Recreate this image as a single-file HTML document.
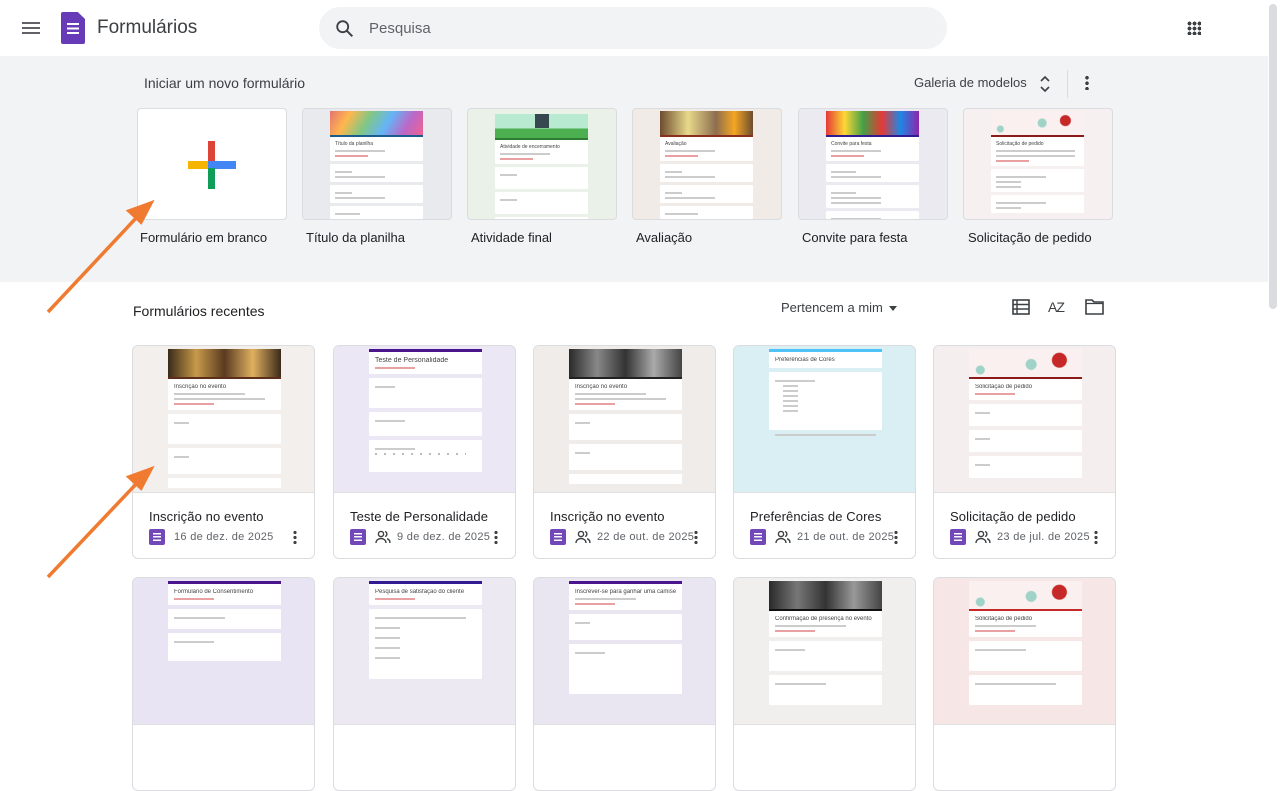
<!DOCTYPE html>
<html><head><meta charset="utf-8"><style>
*{box-sizing:border-box;margin:0;padding:0}
body{width:1280px;height:697px;overflow:hidden;background:#fff;font-family:"Liberation Sans",Arial,sans-serif;color:#202124;position:relative}
.a{position:absolute}
.gal{position:absolute;left:0;top:56px;width:1268px;height:226px;background:#f1f3f4}
.sb{position:absolute;left:1269px;top:4px;width:8px;height:305px;background:#dadce0;border-radius:4px}
.tc{position:absolute;top:108px;width:150px;height:112px;border:1px solid #dadce0;border-radius:4px;overflow:hidden;background:#fff}
.tl{position:absolute;top:230px;font-size:13px;color:#202124}
.tp{position:absolute;left:27px;width:93px;top:2px;bottom:0}
.img{height:24px}
.ln{height:2px}
.bk{background:#fff;margin-bottom:3px;padding:4px 5px;border-radius:1px}
.t1{font-size:5px;color:#444;white-space:nowrap;overflow:hidden}
.t2{height:2px;background:#ccc;margin-top:3px;width:60%}
.t3{height:2px;background:#e8a0a0;margin-top:3px;width:40%}
.rc{position:absolute;width:183px;height:214px;border:1px solid #dadce0;border-radius:6px;overflow:hidden;background:#fff}
.pv{position:absolute;left:0;top:0;width:100%;height:147px;border-bottom:1px solid #e0e0e0}
.pp{position:absolute;left:35px;width:113px;top:3px;bottom:0}
.pp .img{height:28px}
.pp .bk{margin-bottom:4px;padding:5px 6px}
.pp .t1{font-size:6px}
.nm{position:absolute;left:16px;top:163px;font-size:13px;letter-spacing:.1px}
.mt{position:absolute;left:16px;top:182px;height:18px;display:flex;align-items:center;font-size:11px;color:#5f6368;letter-spacing:.3px}
.fi{width:16px;height:16px;background:#7248b9;border-radius:2px;margin-right:9px;position:relative}
.fi:after{content:"";position:absolute;left:4px;top:4px;width:8px;height:8px;background:repeating-linear-gradient(#fff 0 1.5px,transparent 1.5px 3.2px)}
.dots{position:absolute;right:17px;top:184px;width:4px;height:14px;background:radial-gradient(circle,#444 1.6px,transparent 1.8px) 0 0/4px 5px repeat-y}
.ppl{margin-right:6px}
</style></head><body>
<div class="a" style="left:22px;top:22px;width:18px;height:2px;background:#5f6368;box-shadow:0 5px 0 #5f6368,0 10px 0 #5f6368"></div>
<div class="a" style="left:61px;top:12px;width:24px;height:32px;background:#673ab7;border-radius:2px;clip-path:polygon(0 0,70% 0,100% 22%,100% 100%,0 100%)"></div>
<div class="a" style="left:67px;top:23px;width:12px;height:11px;background:repeating-linear-gradient(#fff 0 2px,transparent 2px 4.5px)"></div>
<div class="a" style="left:97px;top:17px;font-size:19px;color:#3c4043">Formulários</div>
<div class="a" style="left:319px;top:7px;width:628px;height:42px;background:#f1f3f4;border-radius:21px"></div>
<svg class="a" style="left:334px;top:18px" width="22" height="22" viewBox="0 0 24 24"><circle cx="9.5" cy="9.5" r="6" fill="none" stroke="#3c4043" stroke-width="2"/><path d="M14 14l6 6" stroke="#3c4043" stroke-width="2.2"/></svg>
<div class="a" style="left:369px;top:20px;font-size:15px;color:#5f6368">Pesquisa</div>
<div class="a" style="left:1187px;top:21px;width:14px;height:14px;background:radial-gradient(circle,#3c4043 1.8px,transparent 2px) 0 0/5px 5px"></div>
<div class="sb"></div>
<div class="gal"></div>
<div class="a" style="left:144px;top:75px;font-size:14px;color:#3c4043">Iniciar um novo formulário</div>
<div class="a" style="left:914px;top:75px;font-size:13px;color:#3c4043">Galeria de modelos</div>
<svg class="a" style="left:1038px;top:75px" width="14" height="18" viewBox="0 0 14 18"><path d="M3 6l4-4 4 4M3 12l4 4 4-4" fill="none" stroke="#3c4043" stroke-width="1.6"/></svg>
<div class="a" style="left:1067px;top:70px;width:1px;height:28px;background:#dadce0"></div>
<div class="a" style="left:1085px;top:75px;width:4px;height:15px;background:radial-gradient(circle,#3c4043 1.7px,transparent 1.9px) 0 0/4px 5.5px repeat-y"></div>

<div class="tc" style="left:137px">
 <div class="a" style="left:70px;top:32px;width:7px;height:24px;background:#db4437"></div>
 <div class="a" style="left:50px;top:52px;width:21px;height:8px;background:#f4b400"></div>
 <div class="a" style="left:70px;top:52px;width:28px;height:8px;background:#4285f4"></div>
 <div class="a" style="left:70px;top:59px;width:7px;height:21px;background:#0f9d58"></div>
</div>
<div class="tl" style="left:140px">Formulário em branco</div>

<div class="tc" style="left:302px;background:#e8eaed"><div class="tp"><div class="img" style="background:linear-gradient(120deg,#e57373,#ffb74d,#81c784,#64b5f6,#ba68c8,#f06292)"></div><div class="ln" style="background:#1a5d8c"></div><div class="bk"><div class="t1">Título da planilha</div><div class="t2"></div><div class="t3"></div></div><div class="bk"><div class="t2" style="width:20%"></div><div class="t2"></div></div><div class="bk"><div class="t2" style="width:20%"></div><div class="t2"></div></div><div class="bk"><div class="t2" style="width:30%"></div></div></div></div>
<div class="tl" style="left:306px">Título da planilha</div>

<div class="tc" style="left:467px;background:#e9f1e8"><div class="tp"><div class="img" style="background:linear-gradient(#b7ead0 0 60%,#4caf50 60%)"><div style="margin:3px auto;width:14px;height:14px;background:#37474f"></div></div><div class="ln" style="background:#2e7d32"></div><div class="bk"><div class="t1">Atividade de encerramento</div><div class="t2"></div><div class="t3"></div></div><div class="bk" style="height:22px"><div class="t2" style="width:20%"></div></div><div class="bk" style="height:22px"><div class="t2" style="width:20%"></div></div><div class="bk"><div class="t2" style="width:80%"></div></div></div></div>
<div class="tl" style="left:471px">Atividade final</div>

<div class="tc" style="left:632px;background:#f0ebe6"><div class="tp"><div class="img" style="background:linear-gradient(90deg,#6d4c2f,#e8d98a 30%,#8d6e4f 60%,#f5a623 80%,#6d4c2f)"></div><div class="ln" style="background:#8b2f1e"></div><div class="bk"><div class="t1">Avaliação</div><div class="t2"></div><div class="t3"></div></div><div class="bk"><div class="t2" style="width:20%"></div><div class="t2"></div></div><div class="bk"><div class="t2" style="width:20%"></div><div class="t2"></div></div><div class="bk"><div class="t2" style="width:40%"></div></div></div></div>
<div class="tl" style="left:636px">Avaliação</div>

<div class="tc" style="left:798px;background:#eaeaf0"><div class="tp"><div class="img" style="background:linear-gradient(90deg,#e53935,#fdd835,#43a047,#e53935,#1e88e5,#8e24aa)"></div><div class="ln" style="background:#311b92"></div><div class="bk"><div class="t1">Convite para festa</div><div class="t2"></div><div class="t3"></div></div><div class="bk"><div class="t2" style="width:30%"></div><div class="t2"></div></div><div class="bk"><div class="t2" style="width:30%"></div><div class="t2"></div><div class="t2"></div></div><div class="bk"><div class="t2"></div></div></div></div>
<div class="tl" style="left:802px">Convite para festa</div>

<div class="tc" style="left:963px;background:#f6f1f0"><div class="tp"><div class="img" style="background:radial-gradient(circle at 80% 40%,#c62828 5px,transparent 6px),radial-gradient(circle at 55% 50%,#9fd3c7 4px,transparent 5px),radial-gradient(circle at 10% 75%,#9fd3c7 3px,transparent 4px),#faf0f0"></div><div class="ln" style="background:#8b1a1a"></div><div class="bk"><div class="t1">Solicitação de pedido</div><div class="t2" style="width:95%"></div><div class="t2" style="width:95%"></div><div class="t3"></div></div><div class="bk"><div class="t2"></div><div class="t2" style="width:30%"></div><div class="t2" style="width:30%"></div></div><div class="bk"><div class="t2"></div><div class="t2" style="width:30%"></div></div></div></div>
<div class="tl" style="left:968px">Solicitação de pedido</div>

<div class="a" style="left:133px;top:303px;font-size:14px;color:#202124">Formulários recentes</div>
<div class="a" style="left:781px;top:300px;font-size:13px;color:#3c4043">Pertencem a mim</div>
<div class="a" style="left:889px;top:306px;width:0;height:0;border-left:4.5px solid transparent;border-right:4.5px solid transparent;border-top:5px solid #3c4043"></div>
<svg class="a" style="left:1012px;top:299px" width="18" height="16" viewBox="0 0 18 16"><rect x="1" y="1" width="16" height="14" fill="none" stroke="#3c4043" stroke-width="1.6"/><path d="M1 5.5h16M1 10h16M5 1v14" stroke="#3c4043" stroke-width="1.4"/></svg>
<div class="a" style="left:1048px;top:299px;font-size:14px;color:#3c4043;letter-spacing:-1px">AZ</div>
<svg class="a" style="left:1085px;top:299px" width="19" height="16" viewBox="0 0 19 16"><path d="M1 1h6l2 2h9v12H1z" fill="none" stroke="#3c4043" stroke-width="1.6"/><path d="M1 4.5h17" stroke="#3c4043" stroke-width="1.2"/></svg>

<div class="rc" style="left:132px;top:345px"><div class="pv" style="background:#f3efec"><div class="pp"><div class="img" style="background:linear-gradient(90deg,#3a2a1a,#c89a4a,#5a3a20,#e0b060,#3a2a1a)"></div><div class="ln" style="background:#5d2e1a"></div><div class="bk"><div class="t1">Inscrição no evento</div><div class="t2" style="width:70%"></div><div class="t2" style="width:90%"></div><div class="t3"></div></div><div class="bk" style="height:30px"><div class="t2" style="width:15%"></div></div><div class="bk" style="height:26px"><div class="t2" style="width:15%"></div></div><div class="bk"></div></div></div><div class="nm">Inscrição no evento</div><div class="mt"><div class="fi"></div>16 de dez. de 2025</div><div class="dots"></div></div>

<div class="rc" style="left:333px;top:345px"><div class="pv" style="background:#ebe7f4"><div class="pp"><div class="ln" style="background:#4a148c;height:3px"></div><div class="bk"><div class="t1" style="font-size:7px">Teste de Personalidade</div><div class="t3"></div></div><div class="bk" style="height:30px"><div class="t2" style="width:20%"></div></div><div class="bk" style="height:24px"><div class="t2" style="width:30%"></div></div><div class="bk" style="height:32px"><div class="t2" style="width:40%"></div><div class="t2" style="width:90%;background:repeating-linear-gradient(90deg,#bbb 0 2px,transparent 2px 9px)"></div></div></div></div><div class="nm">Teste de Personalidade</div><div class="mt"><div class="fi"></div><svg class="ppl" width="16" height="14" viewBox="0 0 16 14"><circle cx="6" cy="4" r="2.6" fill="none" stroke="#3c4043" stroke-width="1.4"/><path d="M1 13c0-3 2.5-4.5 5-4.5s5 1.5 5 4.5M10 1.5a2.6 2.6 0 010 5M12 8.7c1.8.6 3 2 3 4.3" fill="none" stroke="#3c4043" stroke-width="1.4"/></svg>9 de dez. de 2025</div><div class="dots"></div></div>

<div class="rc" style="left:533px;top:345px"><div class="pv" style="background:#f0ecea"><div class="pp"><div class="img" style="background:linear-gradient(90deg,#2a2a2a,#888,#333,#aaa,#444)"></div><div class="ln" style="background:#222"></div><div class="bk"><div class="t1">Inscrição no evento</div><div class="t2" style="width:70%"></div><div class="t2" style="width:90%"></div><div class="t3"></div></div><div class="bk" style="height:26px"><div class="t2" style="width:15%"></div></div><div class="bk" style="height:26px"><div class="t2" style="width:15%"></div></div><div class="bk"></div></div></div><div class="nm">Inscrição no evento</div><div class="mt"><div class="fi"></div><svg class="ppl" width="16" height="14" viewBox="0 0 16 14"><circle cx="6" cy="4" r="2.6" fill="none" stroke="#3c4043" stroke-width="1.4"/><path d="M1 13c0-3 2.5-4.5 5-4.5s5 1.5 5 4.5M10 1.5a2.6 2.6 0 010 5M12 8.7c1.8.6 3 2 3 4.3" fill="none" stroke="#3c4043" stroke-width="1.4"/></svg>22 de out. de 2025</div><div class="dots"></div></div>

<div class="rc" style="left:733px;top:345px"><div class="pv" style="background:#d9eff3"><div class="pp"><div class="ln" style="background:#4fc3f7;height:3px"></div><div class="bk"><div class="t1" style="font-size:6px">Preferências de Cores</div></div><div class="bk" style="height:58px"><div class="t2" style="width:40%"></div><div class="t2" style="width:15%;margin-left:8px"></div><div class="t2" style="width:15%;margin-left:8px"></div><div class="t2" style="width:15%;margin-left:8px"></div><div class="t2" style="width:15%;margin-left:8px"></div><div class="t2" style="width:15%;margin-left:8px"></div><div class="t2" style="width:15%;margin-left:8px"></div></div><div class="t2" style="width:90%;margin:0 auto"></div></div></div><div class="nm">Preferências de Cores</div><div class="mt"><div class="fi"></div><svg class="ppl" width="16" height="14" viewBox="0 0 16 14"><circle cx="6" cy="4" r="2.6" fill="none" stroke="#3c4043" stroke-width="1.4"/><path d="M1 13c0-3 2.5-4.5 5-4.5s5 1.5 5 4.5M10 1.5a2.6 2.6 0 010 5M12 8.7c1.8.6 3 2 3 4.3" fill="none" stroke="#3c4043" stroke-width="1.4"/></svg>21 de out. de 2025</div><div class="dots"></div></div>

<div class="rc" style="left:933px;top:345px"><div class="pv" style="background:#f5eeee"><div class="pp"><div class="img" style="background:radial-gradient(circle at 80% 40%,#c62828 7px,transparent 8px),radial-gradient(circle at 55% 55%,#9fd3c7 5px,transparent 6px),radial-gradient(circle at 10% 75%,#9fd3c7 4px,transparent 5px),#faf0f0"></div><div class="ln" style="background:#8b1a1a"></div><div class="bk"><div class="t1">Solicitação de pedido</div><div class="t3"></div></div><div class="bk" style="height:22px"><div class="t2" style="width:15%"></div></div><div class="bk" style="height:22px"><div class="t2" style="width:15%"></div></div><div class="bk" style="height:22px"><div class="t2" style="width:15%"></div></div></div></div><div class="nm">Solicitação de pedido</div><div class="mt"><div class="fi"></div><svg class="ppl" width="16" height="14" viewBox="0 0 16 14"><circle cx="6" cy="4" r="2.6" fill="none" stroke="#3c4043" stroke-width="1.4"/><path d="M1 13c0-3 2.5-4.5 5-4.5s5 1.5 5 4.5M10 1.5a2.6 2.6 0 010 5M12 8.7c1.8.6 3 2 3 4.3" fill="none" stroke="#3c4043" stroke-width="1.4"/></svg>23 de jul. de 2025</div><div class="dots"></div></div>

<div class="rc" style="left:132px;top:577px"><div class="pv" style="background:#e8e4f3"><div class="pp"><div class="ln" style="background:#4a148c;height:3px"></div><div class="bk"><div class="t1">Formulário de Consentimento</div><div class="t3"></div></div><div class="bk" style="height:20px"><div class="t2" style="width:50%"></div></div><div class="bk" style="height:28px"><div class="t2" style="width:40%"></div></div></div></div></div>
<div class="rc" style="left:333px;top:577px"><div class="pv" style="background:#ece9f2"><div class="pp"><div class="ln" style="background:#311b92;height:3px"></div><div class="bk"><div class="t1">Pesquisa de satisfação do cliente</div><div class="t3"></div></div><div class="bk" style="height:70px"><div class="t2" style="width:90%"></div><div class="t2" style="width:25%;margin-top:8px"></div><div class="t2" style="width:25%;margin-top:8px"></div><div class="t2" style="width:25%;margin-top:8px"></div><div class="t2" style="width:25%;margin-top:8px"></div></div></div></div></div>
<div class="rc" style="left:533px;top:577px"><div class="pv" style="background:#e9e6f2"><div class="pp"><div class="ln" style="background:#4a148c;height:3px"></div><div class="bk"><div class="t1">Inscrever-se para ganhar uma camiseta</div><div class="t2"></div><div class="t3"></div></div><div class="bk" style="height:26px"><div class="t2" style="width:15%"></div></div><div class="bk" style="height:50px"><div class="t2" style="width:30%"></div></div></div></div></div>
<div class="rc" style="left:733px;top:577px"><div class="pv" style="background:#f1efee"><div class="pp"><div class="img" style="background:linear-gradient(90deg,#2a2a2a,#777,#333,#999,#444)"></div><div class="ln" style="background:#111"></div><div class="bk"><div class="t1">Confirmação de presença no evento</div><div class="t2" style="width:70%"></div><div class="t3"></div></div><div class="bk" style="height:30px"><div class="t2" style="width:30%"></div></div><div class="bk" style="height:30px"><div class="t2" style="width:50%"></div></div></div></div></div>
<div class="rc" style="left:933px;top:577px"><div class="pv" style="background:#f6e6e6"><div class="pp"><div class="img" style="background:radial-gradient(circle at 80% 40%,#c62828 7px,transparent 8px),radial-gradient(circle at 55% 55%,#9fd3c7 5px,transparent 6px),radial-gradient(circle at 10% 75%,#9fd3c7 4px,transparent 5px),#faf0f0"></div><div class="ln" style="background:#c62828"></div><div class="bk"><div class="t1">Solicitação de pedido</div><div class="t2"></div><div class="t3"></div></div><div class="bk" style="height:30px"><div class="t2" style="width:50%"></div></div><div class="bk" style="height:30px"><div class="t2" style="width:80%"></div></div></div></div></div>

<svg class="a" style="left:0;top:0" width="300" height="697"><g stroke="#f07a30" stroke-width="3.5" fill="#f07a30"><path d="M48 312L138 216"/><path d="M151 203l-22 8 12 11z"/><path d="M48 577L138 482"/><path d="M151 469l-22 8 12 11z"/></g></svg>
</body></html>
